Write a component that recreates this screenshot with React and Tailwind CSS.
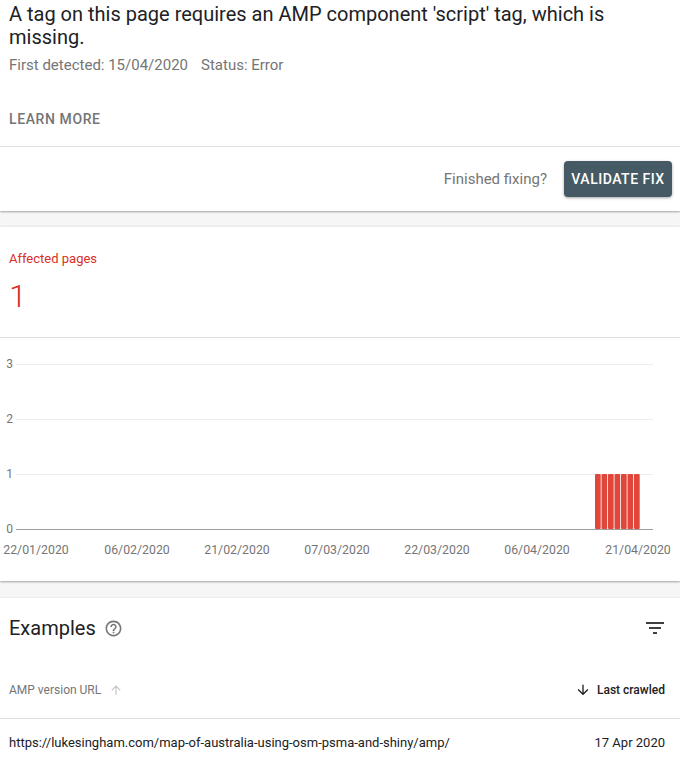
import React from 'react';

const FONT = { fontFamily: 'Roboto, "Noto Sans", Arial, sans-serif' };

const xLabels = [
  { x: 36, t: '22/01/2020' },
  { x: 137, t: '06/02/2020' },
  { x: 237, t: '21/02/2020' },
  { x: 337, t: '07/03/2020' },
  { x: 437, t: '22/03/2020' },
  { x: 537, t: '06/04/2020' },
  { x: 638, t: '21/04/2020' },
];

const yTicks = [
  { v: '3', y: 26 },
  { v: '2', y: 81 },
  { v: '1', y: 136 },
];

// 7 daily bars, each 1 page
const bars = [0, 1, 2, 3, 4, 5, 6];

const IssueChart = () => (
  <svg width="680" height="243" viewBox="0 0 680 243" className="block">
    {yTicks.map((tk) => (
      <g key={tk.v}>
        <line x1="16" x2="653" y1={tk.y + 0.5} y2={tk.y + 0.5} stroke="#ececec" strokeWidth="1" />
        <text x="13" y={tk.y + 4} textAnchor="end" fontSize="12" fill="#757575" style={FONT}>
          {tk.v}
        </text>
      </g>
    ))}
    <text x="13" y="195" textAnchor="end" fontSize="12" fill="#757575" style={FONT}>
      0
    </text>
    {bars.map((i) => (
      <rect key={i} x={595 + i * 6.5} y="136" width="5.7" height="55" rx="1" fill="#e0473a" />
    ))}
    <line x1="16" x2="653" y1="191.5" y2="191.5" stroke="#9e9e9e" strokeWidth="1" />
    {xLabels.map((l) => (
      <text key={l.t} x={l.x} y="216" textAnchor="middle" fontSize="12.3" fill="#757575" style={FONT}>
        {l.t}
      </text>
    ))}
  </svg>
);

const HelpIcon = () => (
  <svg width="19" height="19" viewBox="0 0 24 24" fill="#757575">
    <path d="M11 18h2v-2h-2v2zm1-16C6.48 2 2 6.48 2 12s4.48 10 10 10 10-4.48 10-10S17.52 2 12 2zm0 18c-4.41 0-8-3.59-8-8s3.59-8 8-8 8 3.59 8 8-3.59 8-8 8zm0-14c-2.21 0-4 1.79-4 4h2c0-1.1.9-2 2-2s2 .9 2 2c0 2-3 1.75-3 5h2c0-2.25 3-2.5 3-5 0-2.21-1.79-4-4-4z" />
  </svg>
);

const FilterIcon = () => (
  <svg width="24" height="24" viewBox="0 0 24 24" fill="#3c4043">
    <path d="M10 18h4v-2h-4v2zM3 6v2h18V6H3zm3 7h12v-2H6v2z" />
  </svg>
);

const ArrowUp = ({ color }) => (
  <svg width="14" height="14" viewBox="0 0 24 24" fill={color}>
    <path d="M4 12l1.41 1.41L11 7.83V20h2V7.83l5.58 5.59L20 12l-8-8-8 8z" />
  </svg>
);

const ArrowDown = ({ color }) => (
  <svg width="16" height="16" viewBox="0 0 24 24" fill={color}>
    <path d="M20 12l-1.41-1.41L13 16.17V4h-2v12.17l-5.58-5.59L4 12l8 8 8-8z" />
  </svg>
);

export default function App() {
  return (
    <div className="w-[680px] min-h-[757px] bg-[#f6f6f6] overflow-hidden" style={FONT}>
      {/* issue header */}
      <div className="bg-white shadow-[0_1px_2px_rgba(0,0,0,0.35)]">
        <div className="px-[9px] pt-[3px] pb-[17px] border-b border-[#e0e0e0]">
          <h1 className="text-[20px] leading-[23px] font-normal text-[#202124] pr-[40px]">
            A tag on this page requires an AMP component 'script' tag, which is missing.
          </h1>
          <div className="mt-[6px] text-[15px] leading-[20px] text-[#757575] flex gap-[13px]">
            <span>First detected: 15/04/2020</span>
            <span>Status: Error</span>
          </div>
          <div className="mt-[34px] text-[14px] leading-[20px] font-medium tracking-[0.6px] text-[#757575]">
            LEARN MORE
          </div>
        </div>
        <div className="flex items-center justify-end gap-[17px] pt-[14px] pb-[14px] pr-[8px]">
          <span className="text-[15px] text-[#757575]">Finished fixing?</span>
          <button className="h-[36px] w-[108px] rounded bg-[#455a64] text-white text-[14px] font-medium tracking-[0.5px] shadow-[0_1px_3px_rgba(0,0,0,0.35)]">
            VALIDATE FIX
          </button>
        </div>
      </div>

      {/* affected pages chart */}
      <div className="mt-[15px] bg-white shadow-[0_1px_2px_rgba(0,0,0,0.35)] border-t border-[#ececec]">
        <div className="px-[9px] pt-[23px] h-[111px] border-b border-[#e0e0e0]">
          <div className="text-[13px] leading-[18px] text-[#d93025]">Affected pages</div>
          <div className="mt-[10px] text-[32px] leading-[36px] font-light text-[#d93025]">1</div>
        </div>
        <IssueChart />
      </div>

      {/* examples table */}
      <div className="mt-[16px] bg-white border-t border-[#ececec]">
        <div className="flex items-center justify-between pl-[9px] pr-[13px] pb-[2px] h-[62px]">
          <div className="flex items-center gap-[8px]">
            <span className="text-[20px] leading-[26px] text-[#202124]">Examples</span>
            <HelpIcon />
          </div>
          <FilterIcon />
        </div>
        <div className="flex items-center justify-between pl-[9px] pr-[15px] h-[59px] border-b border-[#e0e0e0] pt-[1px]">
          <div className="flex items-center gap-[8px] text-[12px] text-[#757575]">
            <span>AMP version URL</span>
            <ArrowUp color="#c4c4c4" />
          </div>
          <div className="flex items-center gap-[6px] text-[12px] font-medium text-[#202124]">
            <ArrowDown color="#202124" />
            <span>Last crawled</span>
          </div>
        </div>
        <div className="flex items-center justify-between pl-[9px] pr-[15px] h-[48px] text-[13px] text-[#202124]">
          <span>https://lukesingham.com/map-of-australia-using-osm-psma-and-shiny/amp/</span>
          <span>17 Apr 2020</span>
        </div>
      </div>
    </div>
  );
}
